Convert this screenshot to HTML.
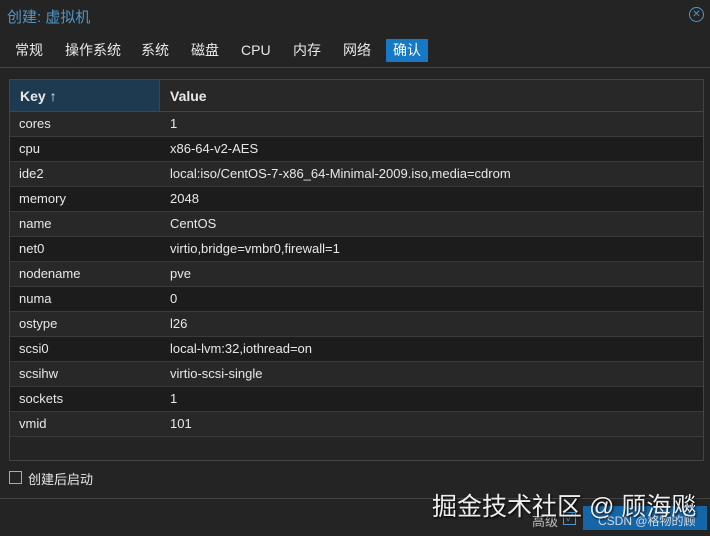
<!DOCTYPE html>
<html><head><meta charset="utf-8"><style>
body{margin:0;width:710px;height:536px;background:#242424;font-family:"Liberation Sans","Noto Sans CJK SC",sans-serif;color:#e8e8e8;position:relative;overflow:hidden;font-size:13px}
.title{position:absolute;left:7px;top:6px;font-size:15px;color:#4f97c9}
.close{position:absolute;right:6px;top:7px;width:13px;height:13px;border:1px solid #4f97c9;border-radius:50%;color:#4f97c9;font-size:10px;line-height:13px;text-align:center}
.tabs{position:absolute;top:39px;left:0;height:28px;width:710px;border-bottom:1px solid #444}
.tab{position:absolute;top:0;height:23px;line-height:23px;font-size:14px;color:#e8e8e8}
.tab.act{background:#1579c6;color:#fff;padding:0 7px}
.grid{position:absolute;left:9px;top:79px;width:693px;height:380px;border:1px solid #444;background:#242424}
.hdr{height:31px;border-bottom:1px solid #444;background:#282828;position:relative;font-weight:bold;font-size:14px}
.hdr .k{position:absolute;left:0;top:0;width:149px;height:31px;background:#1d3a50;border-right:1px solid #444}
.row{height:24px;border-bottom:1px solid #3a3a3a;position:relative;line-height:24px}
.row:nth-child(odd){background:#282828}.row:nth-child(even){background:#1c1c1c}
.c1{position:absolute;left:9px}.c2{position:absolute;left:160px}
.foot{position:absolute;left:0;top:498px;width:710px;border-top:1px solid #444}
</style></head><body>
<div class="title">创建: 虚拟机</div><div class="close">✕</div>
<div class="tabs">
<span class="tab" style="left:15px">常规</span><span class="tab" style="left:65px">操作系统</span><span class="tab" style="left:141px">系统</span><span class="tab" style="left:191px">磁盘</span><span class="tab" style="left:241px">CPU</span><span class="tab" style="left:293px">内存</span><span class="tab" style="left:343px">网络</span><span class="tab act" style="left:386px">确认</span>
</div>
<div class="grid">
<div class="hdr"><div class="k"><span style="position:absolute;left:10px;top:8px">Key ↑</span></div><span style="position:absolute;left:160px;top:8px">Value</span></div>
<div>
<div class="row"><span class="c1">cores</span><span class="c2">1</span></div>
<div class="row"><span class="c1">cpu</span><span class="c2">x86-64-v2-AES</span></div>
<div class="row"><span class="c1">ide2</span><span class="c2">local:iso/CentOS-7-x86_64-Minimal-2009.iso,media=cdrom</span></div>
<div class="row"><span class="c1">memory</span><span class="c2">2048</span></div>
<div class="row"><span class="c1">name</span><span class="c2">CentOS</span></div>
<div class="row"><span class="c1">net0</span><span class="c2">virtio,bridge=vmbr0,firewall=1</span></div>
<div class="row"><span class="c1">nodename</span><span class="c2">pve</span></div>
<div class="row"><span class="c1">numa</span><span class="c2">0</span></div>
<div class="row"><span class="c1">ostype</span><span class="c2">l26</span></div>
<div class="row"><span class="c1">scsi0</span><span class="c2">local-lvm:32,iothread=on</span></div>
<div class="row"><span class="c1">scsihw</span><span class="c2">virtio-scsi-single</span></div>
<div class="row"><span class="c1">sockets</span><span class="c2">1</span></div>
<div class="row"><span class="c1">vmid</span><span class="c2">101</span></div>
</div></div>
<div style="position:absolute;left:9px;top:471px;width:11px;height:11px;border:1px solid #aaa"></div>
<div style="position:absolute;left:28px;top:469px;font-size:13px">创建后启动</div>
<div class="foot"></div>
<div style="position:absolute;left:532px;top:511px;color:#bbb">高级</div>
<div style="position:absolute;left:563px;top:512px;width:11px;height:11px;border:1px solid #4f97c9;color:#4f97c9;font-size:10px;line-height:11px;text-align:center">✓</div>
<div style="position:absolute;left:583px;top:506px;width:124px;height:24px;background:#1566a8"></div>
<div style="position:absolute;left:598px;top:512px;color:#ddd;font-size:12px">CSDN @格物的顾</div>
<div style="position:absolute;left:432px;top:487px;font-size:25px;color:#eee;text-shadow:1px 1px 2px #000">掘金技术社区 @ 顾海飚</div>
</body></html>
